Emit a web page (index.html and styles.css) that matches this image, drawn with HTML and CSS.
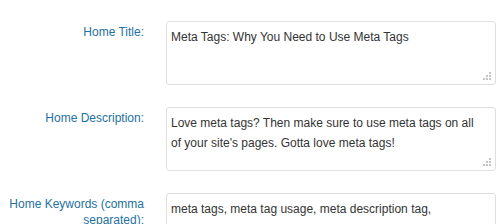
FILE: index.html
```html
<!DOCTYPE html>
<html lang="en">
<head>
    <meta charset="UTF-8">
    <title>Home Page Settings</title>
    <link rel="stylesheet" href="styles.css">
</head>
<body>
    <div class="settings">
        <!-- Home title -->
        <label class="field-label" for="homeTitle">Home Title:</label>
        <div class="field">
            <textarea id="homeTitle">Meta Tags: Why You Need to Use Meta Tags</textarea>
            <span class="grip"><svg width="9" height="9" viewBox="0 0 9 9"><g fill="#c4c4c4"><rect x="6" y="0" width="2" height="2"/><rect x="3" y="3" width="2" height="2"/><rect x="6" y="3" width="2" height="2"/><rect x="0" y="6" width="2" height="2"/><rect x="3" y="6" width="2" height="2"/><rect x="6" y="6" width="2" height="2"/></g></svg></span>
        </div>

        <!-- Home description -->
        <label class="field-label" for="homeDescription">Home Description:</label>
        <div class="field">
            <textarea id="homeDescription">Love meta tags? Then make sure to use meta tags on all of your site's pages. Gotta love meta tags!</textarea>
            <span class="grip"><svg width="9" height="9" viewBox="0 0 9 9"><g fill="#c4c4c4"><rect x="6" y="0" width="2" height="2"/><rect x="3" y="3" width="2" height="2"/><rect x="6" y="3" width="2" height="2"/><rect x="0" y="6" width="2" height="2"/><rect x="3" y="6" width="2" height="2"/><rect x="6" y="6" width="2" height="2"/></g></svg></span>
        </div>

        <!-- Home keywords -->
        <label class="field-label" for="homeKeywords">Home Keywords (comma separated):</label>
        <div class="field">
            <textarea id="homeKeywords">meta tags, meta tag usage, meta description tag, optimization</textarea>
            <span class="grip"><svg width="9" height="9" viewBox="0 0 9 9"><g fill="#c4c4c4"><rect x="6" y="0" width="2" height="2"/><rect x="3" y="3" width="2" height="2"/><rect x="6" y="3" width="2" height="2"/><rect x="0" y="6" width="2" height="2"/><rect x="3" y="6" width="2" height="2"/><rect x="6" y="6" width="2" height="2"/></g></svg></span>
        </div>
    </div>
</body>
</html>
```

FILE: styles.css
```css
body {
    font-family: "Liberation Sans", Arial, sans-serif;
    margin: 0;
    padding: 0;
    background-color: #fff;
}
.settings {
    display: grid;
    grid-template-columns: 144px 330px;
    column-gap: 22px;
    row-gap: 22px;
    padding-top: 21px;
}
.field-label {
    text-align: right;
    font-size: 12px;
    line-height: 16px;
    padding-top: 3px;
    color: #2571a0;
}
.field {
    position: relative;
}
.field textarea {
    display: block;
    width: 100%;
    height: 64px;
    box-sizing: border-box;
    margin: 0;
    padding: 5px 14px 5px 4px;
    font-family: "Liberation Sans", Arial, sans-serif;
    font-size: 12px;
    line-height: 20px;
    color: #333;
    background-color: #fff;
    border: 1px solid #dfdfdf;
    border-radius: 3px;
    resize: none;
    overflow: hidden;
    outline: none;
}
.grip {
    position: absolute;
    right: 4px;
    bottom: 4px;
    width: 9px;
    height: 9px;
    line-height: 0;
}
```
